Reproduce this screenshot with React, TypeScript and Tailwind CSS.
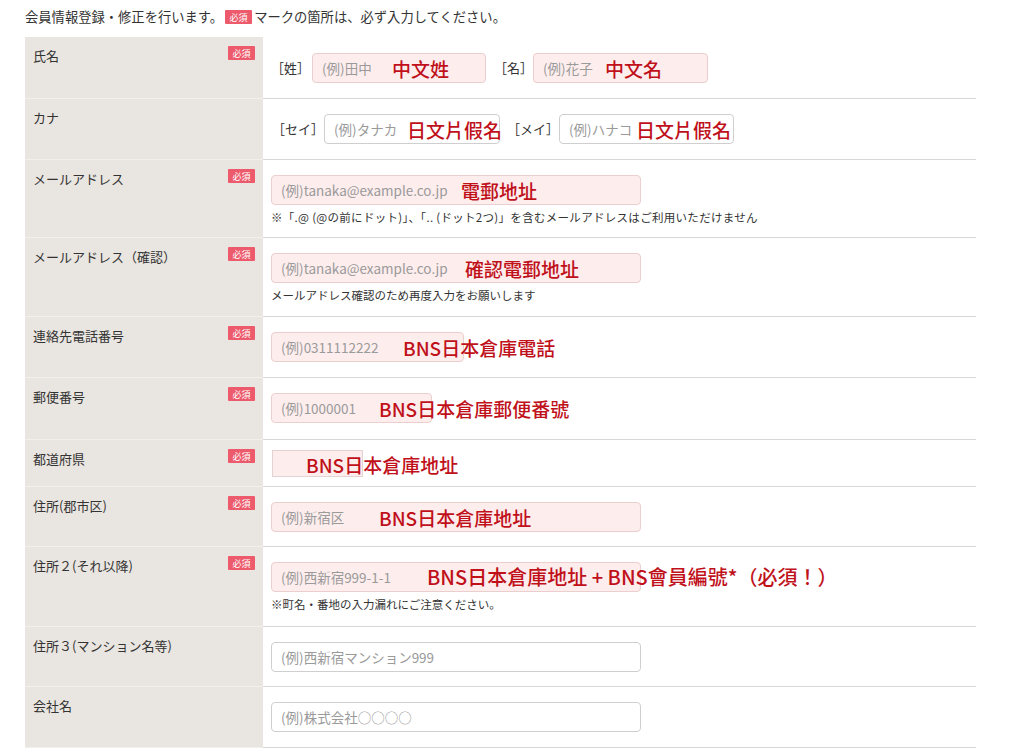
import React from 'react'

const Badge = () => (
  <span className="inline-flex h-[14px] w-[27px] items-center justify-center rounded-[1px] bg-[#ec5a6c] text-[9px] leading-none text-white">
    必須
  </span>
)

const Note = ({ text, size = 'text-[19px]' }: { text: string; size?: string }) => (
  <span
    className={`absolute left-0 top-1/2 -translate-y-1/2 whitespace-nowrap font-['Noto_Sans_CJK_TC',sans-serif] font-medium leading-none text-[#c0111b] ${size}`}
  >
    {text}
  </span>
)

const Field = ({
  width,
  placeholder,
  required,
  note,
  noteAt,
  noteSize,
}: {
  width: string
  placeholder: string
  required?: boolean
  note?: string
  noteAt?: string
  noteSize?: string
}) => (
  <div className={`relative h-[30px] shrink-0 ${width}`}>
    <input
      readOnly
      placeholder={placeholder}
      className={
        required
          ? 'h-full w-full rounded-[4px] border border-[#ebcfcf] bg-[#fdeded] px-[9px] text-[13.5px] outline-none placeholder:text-[#9a9a9a]'
          : 'h-full w-full rounded-[4px] border border-[#cfcfcf] bg-white px-[9px] text-[13.5px] outline-none placeholder:text-[#9a9a9a]'
      }
    />
    {note && (
      <div className={`pointer-events-none absolute top-0 h-full ${noteAt}`}>
        <Note text={note} size={noteSize} />
      </div>
    )}
  </div>
)

const Row = ({
  label,
  required,
  pad = 'py-[15px]',
  children,
}: {
  label: string
  required?: boolean
  pad?: string
  children: React.ReactNode
}) => (
  <>
    <div className="flex items-start justify-between border-b border-[#f3f0ec] bg-[#e9e5e0] pl-[8px] pr-[8px] pt-[9px] text-[13px] text-[#333]">
      <span className="leading-[20px]">{label}</span>
      {required && <Badge />}
    </div>
    <div className={`border-b border-[#d8d8d8] pl-[8px] ${pad}`}>{children}</div>
  </>
)

const Small = ({ children, cls = '' }: { children: React.ReactNode; cls?: string }) => (
  <p className={`mt-[5px] text-[11.5px] leading-[14px] text-[#333] ${cls}`}>{children}</p>
)

const Tag = ({ text, cls = '' }: { text: string; cls?: string }) => (
  <span className={`shrink-0 whitespace-nowrap text-[13px] ${cls}`}>{text}</span>
)

const App = () => {
  return (
    <div className="h-[748px] overflow-hidden bg-white font-['Noto_Sans_CJK_JP',sans-serif] text-[#333]">
      <div className="ml-[25px] w-[951px]">
        <p className="flex h-[37px] items-center pb-[3px] text-[13.3px]">
          会員情報登録・修正を行います。
          <span className="ml-[2px] mr-[2px] flex">
            <Badge />
          </span>
          マークの箇所は、必ず入力してください。
        </p>
        <div className="grid grid-cols-[238px_1fr]">
          <Row label="氏名" required pad="pt-[16px] pb-[15px]">
            <div className="flex items-center">
              <Tag text="［姓］" cls="mr-[2px]" />
              <Field width="w-[174px]" placeholder="(例)田中" required note="中文姓" noteAt="left-[80px]" />
              <Tag text="［名］" cls="ml-[8px]" />
              <Field width="w-[175px]" placeholder="(例)花子" required note="中文名" noteAt="left-[72px]" />
            </div>
          </Row>
          <Row label="カナ">
            <div className="flex items-center">
              <Tag text="［セイ］" cls="ml-[1px]" />
              <Field width="w-[176px]" placeholder="(例)タナカ" note="日文片假名" noteAt="left-[83px]" />
              <Tag text="［メイ］" cls="ml-[7px]" />
              <Field width="w-[175px]" placeholder="(例)ハナコ" note="日文片假名" noteAt="left-[77px]" />
            </div>
          </Row>
          <Row label="メールアドレス" required pad="pt-[15px] pb-[13px]">
            <Field width="w-[370px]" placeholder="(例)tanaka@example.co.jp" required note="電郵地址" noteAt="left-[190px]" />
            <Small cls="tracking-[0.3px]">
              ※「.@ (@の前にドット)」、「.. (ドット2つ)」を含むメールアドレスはご利用いただけません
            </Small>
          </Row>
          <Row label="メールアドレス（確認）" required pad="pt-[15px] pb-[14px]">
            <Field width="w-[370px]" placeholder="(例)tanaka@example.co.jp" required note="確認電郵地址" noteAt="left-[194px]" />
            <Small>メールアドレス確認のため再度入力をお願いします</Small>
          </Row>
          <Row label="連絡先電話番号" required>
            <Field width="w-[193px]" placeholder="(例)0311112222" required note="BNS日本倉庫電話" noteAt="left-[132px]" />
          </Row>
          <Row label="郵便番号" required pad="pt-[15px] pb-[16px]">
            <Field width="w-[161px]" placeholder="(例)1000001" required note="BNS日本倉庫郵便番號" noteAt="left-[108px]" />
          </Row>
          <Row label="都道府県" required pad="pt-[10px] pb-[9px]">
            <div className="relative ml-[1px] h-[27px] w-[91px] border border-[#e3d3d3] bg-[#fdeded]">
              <div className="absolute left-[33px] top-0 h-full">
                <Note text="BNS日本倉庫地址" />
              </div>
            </div>
          </Row>
          <Row label="住所(郡市区)" required pad="pt-[15px] pb-[14px]">
            <Field width="w-[370px]" placeholder="(例)新宿区" required note="BNS日本倉庫地址" noteAt="left-[108px]" />
          </Row>
          <Row label="住所２(それ以降)" required pad="pt-[15px] pb-[15px]">
            <Field
              width="w-[370px]"
              placeholder="(例)西新宿999-1-1"
              required
              note="BNS日本倉庫地址 + BNS會員編號*（必須！）"
              noteAt="left-[156px]"
              noteSize="text-[20px]"
            />
            <Small>※町名・番地の入力漏れにご注意ください。</Small>
          </Row>
          <Row label="住所３(マンション名等)" pad="pt-[15px] pb-[14px]">
            <Field width="w-[370px]" placeholder="(例)西新宿マンション999" />
          </Row>
          <Row label="会社名">
            <Field width="w-[370px]" placeholder="(例)株式会社○○○○" />
          </Row>
        </div>
      </div>
    </div>
  )
}

export default App
